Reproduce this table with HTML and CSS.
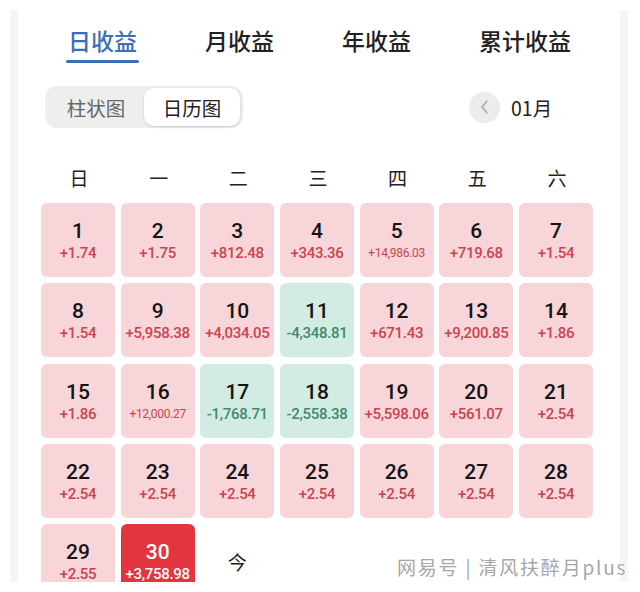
FILE: index.html
```html
<!DOCTYPE html>
<html lang="zh-CN">
<head>
<meta charset="utf-8">
<title>日收益</title>
<link rel="stylesheet" href="styles.css">
</head>
<body>
<div class="viewport">
  <div class="frame">
    <nav class="tabs">
      <div class="tab active"><span class="tab-text">日收益</span><span class="tab-bar"></span></div>
      <div class="tab"><span class="tab-text">月收益</span></div>
      <div class="tab"><span class="tab-text">年收益</span></div>
      <div class="tab"><span class="tab-text">累计收益</span></div>
    </nav>

    <div class="toolbar">
      <div class="segmented">
        <div class="seg">柱状图</div>
        <div class="seg on">日历图</div>
      </div>
      <div class="month">
        <span class="prev"><svg width="14" height="16" viewBox="0 0 14 16"><path d="M9 2 L4 8 L9 14" fill="none" stroke="#a9a9a9" stroke-width="1.6" stroke-linecap="round" stroke-linejoin="round"/></svg></span>
        <span class="month-text">01月</span>
      </div>
    </div>

    <div class="weekdays">
      <span>日</span><span>一</span><span>二</span><span>三</span><span>四</span><span>五</span><span>六</span>
    </div>

    <div class="grid">
      <div class="cell up"><b>1</b><i>+1.74</i></div>
      <div class="cell up"><b>2</b><i>+1.75</i></div>
      <div class="cell up"><b>3</b><i>+812.48</i></div>
      <div class="cell up"><b>4</b><i>+343.36</i></div>
      <div class="cell up"><b>5</b><i class="small">+14,986.03</i></div>
      <div class="cell up"><b>6</b><i>+719.68</i></div>
      <div class="cell up"><b>7</b><i>+1.54</i></div>

      <div class="cell up"><b>8</b><i>+1.54</i></div>
      <div class="cell up"><b>9</b><i>+5,958.38</i></div>
      <div class="cell up"><b>10</b><i>+4,034.05</i></div>
      <div class="cell down"><b>11</b><i>-4,348.81</i></div>
      <div class="cell up"><b>12</b><i>+671.43</i></div>
      <div class="cell up"><b>13</b><i>+9,200.85</i></div>
      <div class="cell up"><b>14</b><i>+1.86</i></div>

      <div class="cell up"><b>15</b><i>+1.86</i></div>
      <div class="cell up"><b>16</b><i class="small">+12,000.27</i></div>
      <div class="cell down"><b>17</b><i>-1,768.71</i></div>
      <div class="cell down"><b>18</b><i>-2,558.38</i></div>
      <div class="cell up"><b>19</b><i>+5,598.06</i></div>
      <div class="cell up"><b>20</b><i>+561.07</i></div>
      <div class="cell up"><b>21</b><i>+2.54</i></div>

      <div class="cell up"><b>22</b><i>+2.54</i></div>
      <div class="cell up"><b>23</b><i>+2.54</i></div>
      <div class="cell up"><b>24</b><i>+2.54</i></div>
      <div class="cell up"><b>25</b><i>+2.54</i></div>
      <div class="cell up"><b>26</b><i>+2.54</i></div>
      <div class="cell up"><b>27</b><i>+2.54</i></div>
      <div class="cell up"><b>28</b><i>+2.54</i></div>

      <div class="cell up"><b>29</b><i>+2.55</i></div>
      <div class="cell today"><b>30</b><i>+3,758.98</i></div>
      <div class="cell blank"><span class="jin">今</span></div>
    </div>
  </div>
  <div class="watermark">网易号 | 清风扶醉月plus</div>
</div>
</body>
</html>
```

FILE: styles.css
```css
* { box-sizing: border-box; }

body {
  margin: 0;
  background: #ffffff;
  font-family: "Noto Sans CJK SC", "Noto Sans", sans-serif;
  color: #1d1d1d;
}

.viewport {
  position: relative;
  width: 640px;
  height: 582px;
  overflow: hidden;
  background: #ffffff;
}

.frame {
  margin: 10px 12px 0 10px;
  height: 620px;
  border-left: 8px solid #f5f5f5;
  border-right: 8px solid #f5f5f5;
}

/* Tabs */
.tabs {
  display: flex;
  gap: 68px;
  padding: 15px 0 0 50px;
}

.tab {
  display: flex;
  flex-direction: column;
  align-items: stretch;
}

.tab-text {
  font-size: 23px;
  line-height: 30px;
  font-weight: 500;
  color: #222222;
  white-space: nowrap;
}

.tab.active .tab-text { color: #3b6fb6; }

.tab-bar {
  height: 3px;
  margin: 5px -2px 0;
  border-radius: 2px;
  background: #3b6fb6;
}

/* Toolbar */
.toolbar {
  display: flex;
  align-items: center;
  margin-top: 23px;
  padding-left: 27px;
}

.segmented {
  display: flex;
  padding: 2px 3px;
  background: #eeeeee;
  border-radius: 12px;
}

.seg {
  width: 96px;
  height: 38px;
  display: flex;
  align-items: center;
  justify-content: center;
  font-size: 19.5px;
  color: #666666;
  border-radius: 10px;
}

.seg.on {
  background: #ffffff;
  color: #222222;
  box-shadow: 0 1px 3px rgba(0, 0, 0, 0.14);
}

.month {
  display: flex;
  align-items: center;
  margin-left: 226px;
}

.prev {
  width: 31px;
  height: 31px;
  border-radius: 50%;
  background: #ececec;
  display: flex;
  align-items: center;
  justify-content: center;
}

.month-text {
  margin-left: 11px;
  font-size: 19.5px;
  color: #222222;
}

/* Weekdays */
.weekdays {
  display: grid;
  grid-template-columns: repeat(7, 74px);
  column-gap: 5.67px;
  padding-left: 24px;
  margin-top: 38px;
  height: 24px;
}

.weekdays span {
  text-align: center;
  font-size: 19px;
  line-height: 24px;
  color: #222222;
}

/* Grid */
.grid {
  display: grid;
  grid-template-columns: repeat(7, 74px);
  grid-auto-rows: 74px;
  column-gap: 5.67px;
  row-gap: 6.25px;
  padding-left: 23px;
  margin-top: 13px;
}

.cell {
  border-radius: 6px;
  display: flex;
  flex-direction: column;
  align-items: center;
  padding-top: 16px;
  font-family: "Roboto", "Noto Sans", sans-serif;
}

.cell b {
  font-size: 21px;
  line-height: 24px;
  font-weight: 500;
  color: #141414;
}

.cell i {
  font-style: normal;
  font-size: 15px;
  line-height: 20px;
  font-weight: 500;
  letter-spacing: -0.3px;
  white-space: nowrap;
}

.cell i.small {
  font-size: 12px;
  font-weight: 400;
  letter-spacing: -0.3px;
}

.cell.up { background: #f8d5d9; }
.cell.up i { color: #c8444f; }

.cell.down { background: #d3ece3; }
.cell.down i { color: #3e8b6b; }

.cell.today { background: #e3353f; }
.cell.today b,
.cell.today i { color: #ffffff; }

.cell.blank {
  background: transparent;
  justify-content: center;
  padding-top: 0;
}

.jin {
  font-family: "Noto Sans CJK SC", sans-serif;
  font-size: 19px;
  color: #222222;
}

/* Watermark overlay */
.watermark {
  position: absolute;
  left: 397px;
  top: 555px;
  font-size: 19px;
  line-height: 24px;
  letter-spacing: 1.8px;
  color: #a6a6a6;
  white-space: nowrap;
  text-shadow: 0 0 2px #ffffff, 0 0 1px #ffffff;
}
```
